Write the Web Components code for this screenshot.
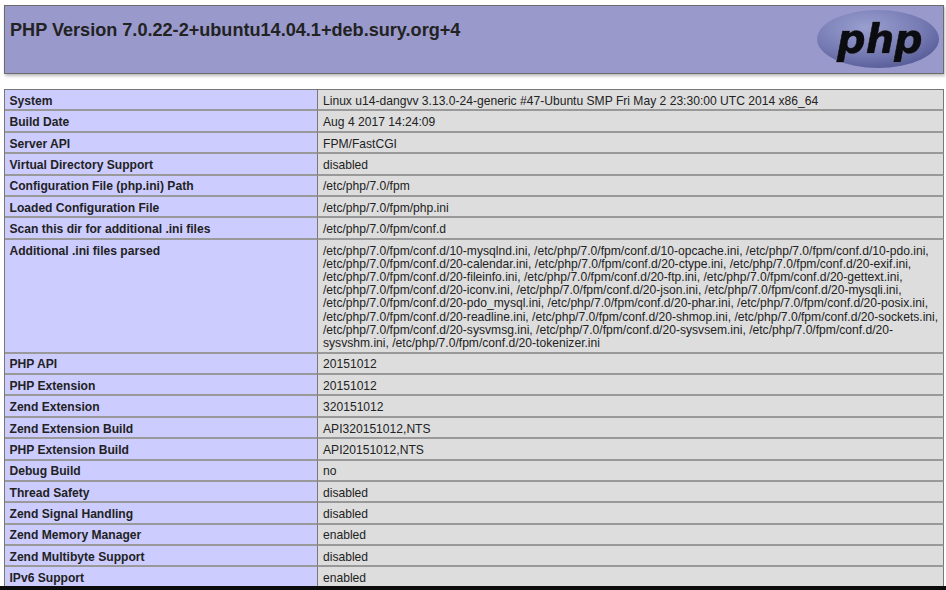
<!DOCTYPE html>
<html>
<head>
<meta charset="utf-8">
<title>phpinfo()</title>
<style>
html, body { margin: 0; padding: 0; background: #fff; }
body { font-family: "Liberation Sans", Arial, sans-serif; color: #222; }
</style>
</head>
<body>
<php-info>
  <php-header slot="header">PHP Version 7.0.22-2+ubuntu14.04.1+deb.sury.org+4</php-header>
  <php-row name="System">Linux u14-dangvv 3.13.0-24-generic #47-Ubuntu SMP Fri May 2 23:30:00 UTC 2014 x86_64</php-row>
  <php-row name="Build Date">Aug 4 2017 14:24:09</php-row>
  <php-row name="Server API">FPM/FastCGI</php-row>
  <php-row name="Virtual Directory Support">disabled</php-row>
  <php-row name="Configuration File (php.ini) Path">/etc/php/7.0/fpm</php-row>
  <php-row name="Loaded Configuration File">/etc/php/7.0/fpm/php.ini</php-row>
  <php-row name="Scan this dir for additional .ini files">/etc/php/7.0/fpm/conf.d</php-row>
  <php-row name="Additional .ini files parsed">/etc/php/7.0/fpm/conf.d/10-mysqlnd.ini, /etc/php/7.0/fpm/conf.d/10-opcache.ini, /etc/php/7.0/fpm/conf.d/10-pdo.ini, /etc/php/7.0/fpm/conf.d/20-calendar.ini, /etc/php/7.0/fpm/conf.d/20-ctype.ini, /etc/php/7.0/fpm/conf.d/20-exif.ini, /etc/php/7.0/fpm/conf.d/20-fileinfo.ini, /etc/php/7.0/fpm/conf.d/20-ftp.ini, /etc/php/7.0/fpm/conf.d/20-gettext.ini, /etc/php/7.0/fpm/conf.d/20-iconv.ini, /etc/php/7.0/fpm/conf.d/20-json.ini, /etc/php/7.0/fpm/conf.d/20-mysqli.ini, /etc/php/7.0/fpm/conf.d/20-pdo_mysql.ini, /etc/php/7.0/fpm/conf.d/20-phar.ini, /etc/php/7.0/fpm/conf.d/20-posix.ini, /etc/php/7.0/fpm/conf.d/20-readline.ini, /etc/php/7.0/fpm/conf.d/20-shmop.ini, /etc/php/7.0/fpm/conf.d/20-sockets.ini, /etc/php/7.0/fpm/conf.d/20-sysvmsg.ini, /etc/php/7.0/fpm/conf.d/20-sysvsem.ini, /etc/php/7.0/fpm/conf.d/20-sysvshm.ini, /etc/php/7.0/fpm/conf.d/20-tokenizer.ini</php-row>
  <php-row name="PHP API">20151012</php-row>
  <php-row name="PHP Extension">20151012</php-row>
  <php-row name="Zend Extension">320151012</php-row>
  <php-row name="Zend Extension Build">API320151012,NTS</php-row>
  <php-row name="PHP Extension Build">API20151012,NTS</php-row>
  <php-row name="Debug Build">no</php-row>
  <php-row name="Thread Safety">disabled</php-row>
  <php-row name="Zend Signal Handling">disabled</php-row>
  <php-row name="Zend Memory Manager">enabled</php-row>
  <php-row name="Zend Multibyte Support">disabled</php-row>
  <php-row name="IPv6 Support">enabled</php-row>
</php-info>
<script>
class PhpInfo extends HTMLElement {
  constructor() {
    super();
    this.attachShadow({ mode: "open" }).innerHTML = `
<style>
:host { display: flex; flex-direction: column; width: 946px; height: 590px; overflow: hidden; }
#page { flex: 1; min-height: 0; overflow: hidden; padding: 5px 2px 0 4px; display: flex; flex-direction: column; gap: 15px; }
#table { border-top: 1px solid #777; border-left: 1px solid #777; flex: none; }
#bar { flex: none; height: 4px; background: #0c0c0c; }
</style>
<div id="page">
  <slot name="header"></slot>
  <div id="table"><slot></slot></div>
</div>
<div id="bar"></div>`;
  }
}

class PhpHeader extends HTMLElement {
  constructor() {
    super();
    this.attachShadow({ mode: "open" }).innerHTML = `
<style>
:host { display: flex; justify-content: space-between; box-sizing: border-box; height: 69px; flex: none; background: #9999cc; border: 1px solid #6b6b6b; box-shadow: 1px 2px 3px #bbb; padding: 0 3px 0 5px; }
h1 { margin: 0; padding-top: 14px; font: bold 18.1px/20px "Liberation Sans", Arial, sans-serif; color: #222; }
svg { display: block; margin-top: 4px; flex: none; }
text { font: italic bold 40px "DejaVu Sans", sans-serif; filter: drop-shadow(0 0 0.5px #e4e5f5); }
</style>
<h1><slot></slot></h1>
<svg width="124" height="60" viewBox="0 0 124 60">
  <defs>
    <radialGradient id="g" cx="0.4" cy="0.3" r="0.8">
      <stop offset="0" stop-color="#9a9fd0"/>
      <stop offset="0.6" stop-color="#7479b2"/>
      <stop offset="1" stop-color="#4f5591"/>
    </radialGradient>
  </defs>
  <ellipse cx="62" cy="29" rx="61" ry="29" fill="url(#g)"/>
  <text x="21" y="43" fill="#0b0b12" stroke="#0b0b12" stroke-width="0.7">php</text>
</svg>`;
  }
}

class PhpRow extends HTMLElement {
  constructor() {
    super();
    this.attachShadow({ mode: "open" }).innerHTML = `
<style>
:host { display: grid; grid-template-columns: 313px 1fr; font-size: 12.1px; line-height: 13.2px; color: #222; }
div { box-sizing: border-box; padding: 4.8px 4.5px 1.4px; border-right: 1px solid #777; border-bottom: 2px solid #999; }
#e { background: #ccccff; font-weight: bold; }
#v { background: #dddddd; padding-left: 5px; overflow-wrap: anywhere; }
</style>
<div id="e"></div>
<div id="v"><slot></slot></div>`;
    this.shadowRoot.getElementById("e").textContent = this.getAttribute("name");
  }
}

customElements.define("php-info", PhpInfo);
customElements.define("php-header", PhpHeader);
customElements.define("php-row", PhpRow);
</script>
</body>
</html>
